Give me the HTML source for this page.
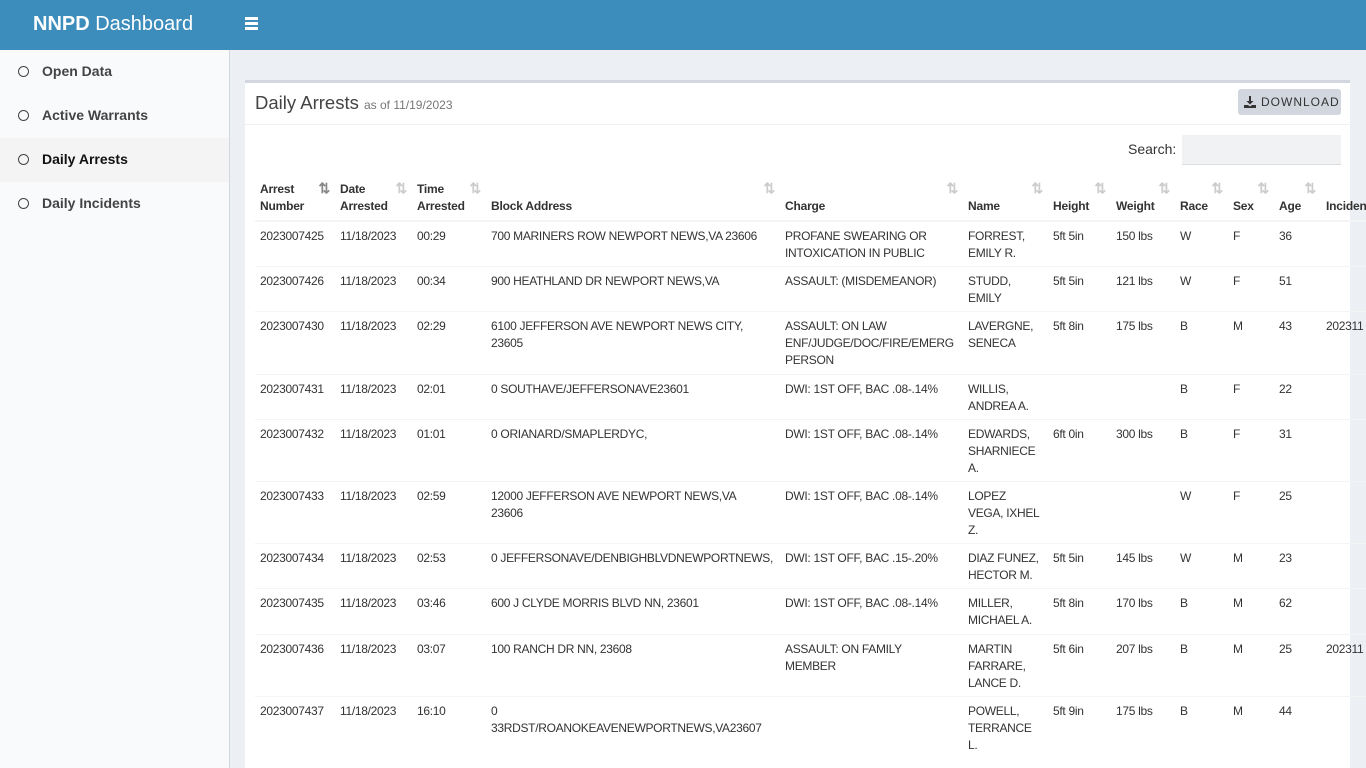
<!DOCTYPE html>
<html><head><meta charset="utf-8"><style>
*{margin:0;padding:0;box-sizing:border-box}
html,body{width:1366px;height:768px;overflow:hidden}
body{background:#ecf0f5;font-family:"Liberation Sans",sans-serif;color:#333;position:relative}
.top{position:absolute;left:0;top:0;width:1366px;height:50px;background:#3c8dbc;color:#fff}
.logo{position:absolute;left:33px;top:13px;font-size:20px}
.logo b{font-weight:bold}
.burger{position:absolute;left:245px;top:17px;width:13px}
.burger i{display:block;height:2.5px;background:#fff;margin-bottom:2.5px}
.side{position:absolute;left:0;top:50px;width:230px;height:718px;background:#f9fafc;border-right:1px solid #d2d6de}
.side div{height:44px;line-height:42px;font-size:14px;font-weight:bold;color:#444;padding-left:42px;position:relative}
.side div:before{content:"";position:absolute;left:18px;top:16px;width:9px;height:9px;border:1px solid #444;border-radius:50%}
.side .act{background:#f4f4f5;color:#111}
.card{position:absolute;left:245px;top:80px;width:1105px;height:688px;background:#fff;border-top:3px solid #d2d6de;overflow:visible}
.title{position:absolute;left:10px;top:9px;font-size:18.5px;color:#444}
.title small{font-size:12px;color:#777}
.hr{position:absolute;left:0;top:41px;width:1105px;height:1px;background:#f0f0f0}
.dl{position:absolute;left:993px;top:6px;width:103px;height:26px;background:#d2d6de;border-radius:3px;font-size:12px;letter-spacing:1px;color:#333;line-height:26px;padding-left:23px}
.dl svg{position:absolute;left:6px;top:7px}
.search{position:absolute;left:883px;top:58px;font-size:14px;color:#333}
.sbox{position:absolute;left:937px;top:52px;width:159px;height:30px;background:#f0f2f4;border-bottom:1px solid #ddd}
table{position:absolute;left:10px;top:94px;width:1126px;border-collapse:collapse;table-layout:fixed;font-size:12px;white-space:nowrap}
th{font-weight:bold;text-align:left;vertical-align:bottom;padding:4px 5px 5px;line-height:17px;position:relative;border-bottom:2px solid #f4f4f4;color:#333;letter-spacing:-0.2px}
th:after{content:"⇅";position:absolute;right:5px;top:3px;font-size:14px;color:#ccc;font-weight:bold}
th.s:after{content:"⇅";color:#888}
th.n:after{content:""}
td{vertical-align:top;padding:6px 5px 4.2px;line-height:17px;border-top:1px solid #f4f4f4;color:#333;overflow:visible;letter-spacing:-0.3px}
</style></head><body>
<div class="top"><div class="logo"><b>NNPD</b> Dashboard</div><div class="burger"><i></i><i></i><i></i></div></div>
<div class="side"><div>Open Data</div><div>Active Warrants</div><div class="act">Daily Arrests</div><div>Daily Incidents</div></div>
<div class="card">
<div class="title">Daily Arrests <small>as of 11/19/2023</small></div>
<div class="dl"><svg width="12" height="12" viewBox="0 0 12 12"><path d="M5 0h2v5h2.5L6 8.5 2.5 5H5z" fill="#333"/><path d="M0 9h4l2 1.5L8 9h4v3H0z" fill="#333"/></svg>DOWNLOAD</div>
<div class="hr"></div>
<div class="search">Search:</div><div class="sbox"></div>
<table>
<colgroup><col style="width:80px"><col style="width:77px"><col style="width:74px"><col style="width:294px"><col style="width:183px"><col style="width:85px"><col style="width:63px"><col style="width:64px"><col style="width:53px"><col style="width:46px"><col style="width:47px"><col style="width:60px"></colgroup>
<tr><th class="s">Arrest<br>Number</th><th>Date<br>Arrested</th><th>Time<br>Arrested</th><th>Block Address</th><th>Charge</th><th>Name</th><th>Height</th><th>Weight</th><th>Race</th><th>Sex</th><th>Age</th><th class="n">Incident</th></tr>
<tr><td>2023007425</td><td>11/18/2023</td><td>00:29</td><td>700 MARINERS ROW NEWPORT NEWS,VA 23606</td><td>PROFANE SWEARING OR<br>INTOXICATION IN PUBLIC</td><td>FORREST,<br>EMILY R.</td><td>5ft 5in</td><td>150 lbs</td><td>W</td><td>F</td><td>36</td><td></td></tr>
<tr><td>2023007426</td><td>11/18/2023</td><td>00:34</td><td>900 HEATHLAND DR NEWPORT NEWS,VA</td><td>ASSAULT: (MISDEMEANOR)</td><td>STUDD,<br>EMILY</td><td>5ft 5in</td><td>121 lbs</td><td>W</td><td>F</td><td>51</td><td></td></tr>
<tr><td>2023007430</td><td>11/18/2023</td><td>02:29</td><td>6100 JEFFERSON AVE NEWPORT NEWS CITY,<br>23605</td><td>ASSAULT: ON LAW<br>ENF/JUDGE/DOC/FIRE/EMERG<br>PERSON</td><td>LAVERGNE,<br>SENECA</td><td>5ft 8in</td><td>175 lbs</td><td>B</td><td>M</td><td>43</td><td>202311</td></tr>
<tr><td>2023007431</td><td>11/18/2023</td><td>02:01</td><td>0 SOUTHAVE/JEFFERSONAVE23601</td><td>DWI: 1ST OFF, BAC .08-.14%</td><td>WILLIS,<br>ANDREA A.</td><td></td><td></td><td>B</td><td>F</td><td>22</td><td></td></tr>
<tr><td>2023007432</td><td>11/18/2023</td><td>01:01</td><td>0 ORIANARD/SMAPLERDYC,</td><td>DWI: 1ST OFF, BAC .08-.14%</td><td>EDWARDS,<br>SHARNIECE<br>A.</td><td>6ft 0in</td><td>300 lbs</td><td>B</td><td>F</td><td>31</td><td></td></tr>
<tr><td>2023007433</td><td>11/18/2023</td><td>02:59</td><td>12000 JEFFERSON AVE NEWPORT NEWS,VA<br>23606</td><td>DWI: 1ST OFF, BAC .08-.14%</td><td>LOPEZ<br>VEGA, IXHEL<br>Z.</td><td></td><td></td><td>W</td><td>F</td><td>25</td><td></td></tr>
<tr><td>2023007434</td><td>11/18/2023</td><td>02:53</td><td>0 JEFFERSONAVE/DENBIGHBLVDNEWPORTNEWS,</td><td>DWI: 1ST OFF, BAC .15-.20%</td><td>DIAZ FUNEZ,<br>HECTOR M.</td><td>5ft 5in</td><td>145 lbs</td><td>W</td><td>M</td><td>23</td><td></td></tr>
<tr><td>2023007435</td><td>11/18/2023</td><td>03:46</td><td>600 J CLYDE MORRIS BLVD NN, 23601</td><td>DWI: 1ST OFF, BAC .08-.14%</td><td>MILLER,<br>MICHAEL A.</td><td>5ft 8in</td><td>170 lbs</td><td>B</td><td>M</td><td>62</td><td></td></tr>
<tr><td>2023007436</td><td>11/18/2023</td><td>03:07</td><td>100 RANCH DR NN, 23608</td><td>ASSAULT: ON FAMILY<br>MEMBER</td><td>MARTIN<br>FARRARE,<br>LANCE D.</td><td>5ft 6in</td><td>207 lbs</td><td>B</td><td>M</td><td>25</td><td>202311</td></tr>
<tr><td>2023007437</td><td>11/18/2023</td><td>16:10</td><td>0<br>33RDST/ROANOKEAVENEWPORTNEWS,VA23607</td><td></td><td>POWELL,<br>TERRANCE<br>L.</td><td>5ft 9in</td><td>175 lbs</td><td>B</td><td>M</td><td>44</td><td></td></tr>
</table>
</div>
</body></html>
